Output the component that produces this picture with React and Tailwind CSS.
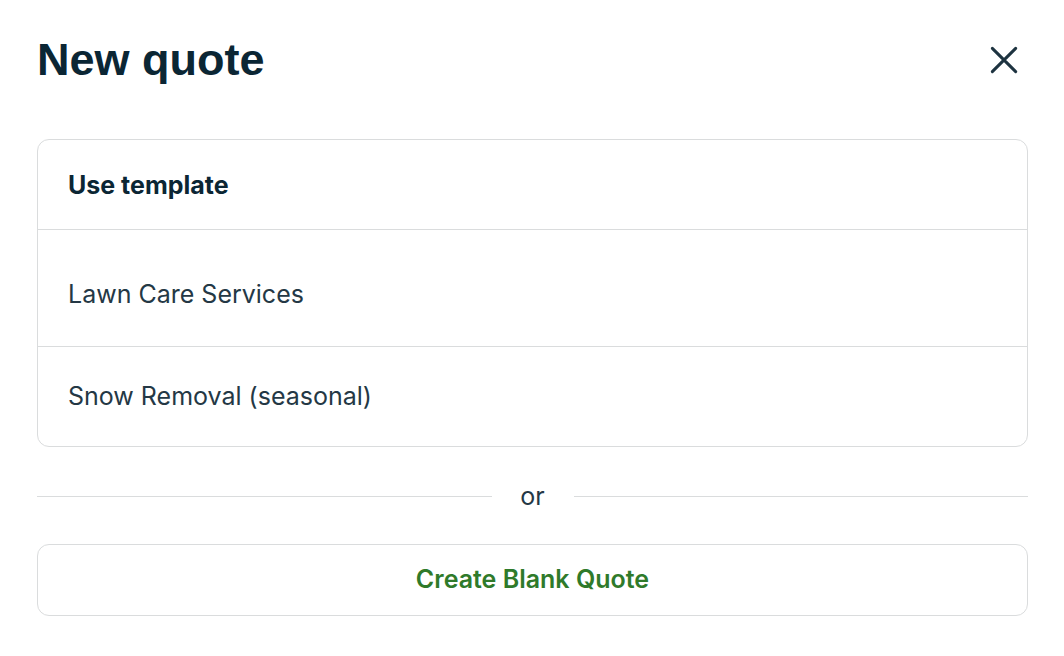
import React from 'react';

const templates = [
  { name: 'Lawn Care Services', cls: 'pt-[49px] pb-[37px]' },
  { name: 'Snow Removal (seasonal)', cls: 'pt-[34px] pb-[35px]' },
];

const App = () => {
  return (
    <div className="min-h-screen bg-white pl-[37px] pr-[36px] pt-[34px] text-[#0b2634]" style={{ fontFamily: 'Inter, "Noto Sans", sans-serif' }}>
      {/* header */}
      <div className="flex items-center justify-between">
        <h1 className="text-[45px] leading-[52px] font-bold" style={{ fontFamily: '"Liberation Sans", Arial, sans-serif' }}>
          New quote
        </h1>
        <button className="mr-[4px] text-[#1d3340]">
          <svg width="40" height="40" viewBox="0 0 24 24" fill="none" stroke="currentColor" strokeWidth="1.8" strokeLinecap="round">
            <path d="M5 5l14 14M19 5L5 19" />
          </svg>
        </button>
      </div>

      {/* template list */}
      <div className="mt-[53px] rounded-[12px] border border-[#dadcdd]">
        <div className="h-[90px] px-[30px] flex items-center border-b border-[#dadcdd]">
          <span className="text-[25px] leading-[30px] font-bold">Use template</span>
        </div>
        {templates.map((t, i) => (
          <div key={t.name} className={`px-[30px] ${t.cls} ${i < templates.length - 1 ? 'border-b border-[#dadcdd]' : ''}`}>
            <div className="text-[25px] leading-[30px] text-[#243845]">{t.name}</div>
          </div>
        ))}
      </div>

      {/* divider */}
      <div className="mt-[34px] flex items-center">
        <div className="flex-1 h-px bg-[#dadcdd]" />
        <span className="w-[82px] text-center text-[25px] leading-[30px] text-[#243845]">or</span>
        <div className="flex-1 h-px bg-[#dadcdd]" />
      </div>

      <button className="mt-[33px] w-full h-[72px] rounded-[12px] border border-[#dadcdd] text-[25px] font-semibold text-[#2f7a2a]">
        Create Blank Quote
      </button>
    </div>
  );
};

export default App;
